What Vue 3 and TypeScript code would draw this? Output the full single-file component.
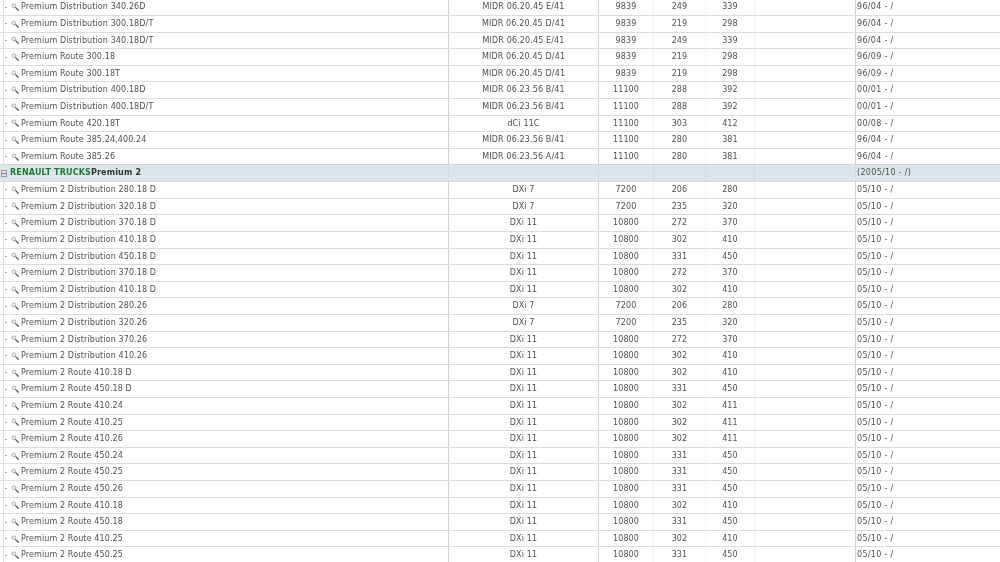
<script setup lang="ts">
interface Row { name: string; engine: string; cc: string; kw: string; hp: string; date: string }
const mk = (name: string, engine: string, cc: string, kw: string, hp: string, date: string): Row => ({ name, engine, cc, kw, hp, date })
const first: Row[] = [
  mk('Premium Distribution 340.26D', 'MIDR 06.20.45 E/41', '9839', '249', '339', '96/04 - /'),
  mk('Premium Distribution 300.18D/T', 'MIDR 06.20.45 D/41', '9839', '219', '298', '96/04 - /'),
  mk('Premium Distribution 340.18D/T', 'MIDR 06.20.45 E/41', '9839', '249', '339', '96/04 - /'),
  mk('Premium Route 300.18', 'MIDR 06.20.45 D/41', '9839', '219', '298', '96/09 - /'),
  mk('Premium Route 300.18T', 'MIDR 06.20.45 D/41', '9839', '219', '298', '96/09 - /'),
  mk('Premium Distribution 400.18D', 'MIDR 06.23.56 B/41', '11100', '288', '392', '00/01 - /'),
  mk('Premium Distribution 400.18D/T', 'MIDR 06.23.56 B/41', '11100', '288', '392', '00/01 - /'),
  mk('Premium Route 420.18T', 'dCi 11C', '11100', '303', '412', '00/08 - /'),
  mk('Premium Route 385.24,400.24', 'MIDR 06.23.56 B/41', '11100', '280', '381', '96/04 - /'),
  mk('Premium Route 385.26', 'MIDR 06.23.56 A/41', '11100', '280', '381', '96/04 - /'),
]
const d = '05/10 - /'
const second: Row[] = [
  mk('Premium 2 Distribution 280.18 D', 'DXi 7', '7200', '206', '280', d),
  mk('Premium 2 Distribution 320.18 D', 'DXi 7', '7200', '235', '320', d),
  mk('Premium 2 Distribution 370.18 D', 'DXi 11', '10800', '272', '370', d),
  mk('Premium 2 Distribution 410.18 D', 'DXi 11', '10800', '302', '410', d),
  mk('Premium 2 Distribution 450.18 D', 'DXi 11', '10800', '331', '450', d),
  mk('Premium 2 Distribution 370.18 D', 'DXi 11', '10800', '272', '370', d),
  mk('Premium 2 Distribution 410.18 D', 'DXi 11', '10800', '302', '410', d),
  mk('Premium 2 Distribution 280.26', 'DXi 7', '7200', '206', '280', d),
  mk('Premium 2 Distribution 320.26', 'DXi 7', '7200', '235', '320', d),
  mk('Premium 2 Distribution 370.26', 'DXi 11', '10800', '272', '370', d),
  mk('Premium 2 Distribution 410.26', 'DXi 11', '10800', '302', '410', d),
  mk('Premium 2 Route 410.18 D', 'DXi 11', '10800', '302', '410', d),
  mk('Premium 2 Route 450.18 D', 'DXi 11', '10800', '331', '450', d),
  mk('Premium 2 Route 410.24', 'DXi 11', '10800', '302', '411', d),
  mk('Premium 2 Route 410.25', 'DXi 11', '10800', '302', '411', d),
  mk('Premium 2 Route 410.26', 'DXi 11', '10800', '302', '411', d),
  mk('Premium 2 Route 450.24', 'DXi 11', '10800', '331', '450', d),
  mk('Premium 2 Route 450.25', 'DXi 11', '10800', '331', '450', d),
  mk('Premium 2 Route 450.26', 'DXi 11', '10800', '331', '450', d),
  mk('Premium 2 Route 410.18', 'DXi 11', '10800', '302', '410', d),
  mk('Premium 2 Route 450.18', 'DXi 11', '10800', '331', '450', d),
  mk('Premium 2 Route 410.25', 'DXi 11', '10800', '302', '410', d),
  mk('Premium 2 Route 450.25', 'DXi 11', '10800', '331', '450', d),
]
const sections = [
  { head: null as null | { brand: string; model: string; date: string }, rows: first },
  { head: { brand: 'RENAULT TRUCKS', model: 'Premium 2', date: '(2005/10 - /)' }, rows: second },
]
</script>

<template>
  <div class="page">
    <div class="list">
      <template v-for="(s, i) in sections" :key="i">
        <div v-if="s.head" class="row head">
          <div class="name">
            <span class="box"><span class="minus"></span></span>
            <b class="brand">{{ s.head.brand }}</b><b class="model">{{ s.head.model }}</b>
          </div>
          <div class="cell strong"></div>
          <div class="cell strong"></div>
          <div class="cell"></div>
          <div class="cell"></div>
          <div class="cell"></div>
          <div class="cell strong date">{{ s.head.date }}</div>
        </div>
        <div v-for="(r, j) in s.rows" :key="j" class="row">
          <div class="name">
            <span class="tree"></span>
            <span class="dash"></span>
            <svg class="icon" width="8" height="8" viewBox="0 0 8 8" aria-hidden="true">
              <circle cx="2.8" cy="2.8" r="1.9" fill="#f0f0f0" stroke="#a0a0a0" stroke-width="0.8" />
              <path d="M4.4 4.4 L7.6 7.6" stroke="#555" stroke-width="1.3" />
            </svg>
            <span class="label">{{ r.name }}</span>
          </div>
          <div class="cell strong mid">{{ r.engine }}</div>
          <div class="cell strong mid">{{ r.cc }}</div>
          <div class="cell mid">{{ r.kw }}</div>
          <div class="cell mid">{{ r.hp }}</div>
          <div class="cell"></div>
          <div class="cell strong date">{{ r.date }}</div>
        </div>
      </template>
    </div>
  </div>
</template>

<style>
html, body { margin: 0; background: #fff; overflow: hidden; }
</style>

<style scoped>
.page {
  width: 1000px;
  height: 562px;
  overflow: hidden;
  background: #fff;
  font-family: "DejaVu Sans", Verdana, sans-serif;
  font-size: 8px;
  color: #505050;
}
.list { margin-top: -0.64px; filter: blur(0.25px); }
.row {
  display: grid;
  grid-template-columns: 448px 150px 55px 52px 49px 101px 145px;
  height: 16.62px;
  box-sizing: border-box;
  border-bottom: 1px solid #dcdcdc;
  line-height: 15.6px;
  white-space: nowrap;
}
.head {
  background: #dce5ea;
  border-bottom-color: #d3dade;
  box-shadow: 0 -1px 0 #cdd5d9;
}
.name { display: flex; align-items: center; min-width: 0; }
.tree {
  align-self: stretch;
  width: 0;
  margin: 0 0 -1px 3px;
  border-left: 1px solid #dedede;
}
.dash { width: 2px; height: 1px; background: #a8a8a8; margin-left: 1px; }
.icon { margin-left: 4px; flex: none; }
.label { margin-left: 2px; letter-spacing: 0.11px; }
.box {
  display: flex;
  align-items: center;
  justify-content: center;
  box-sizing: border-box;
  width: 6px;
  height: 7px;
  margin: 0 3px 0 1px;
  border: 1px solid #999;
  flex: none;
}
.minus { width: 4px; height: 1px; background: #777; }
.brand { color: #1b7d33; letter-spacing: 0.16px; }
.model { color: #333; letter-spacing: 0.16px; }
.cell { border-left: 1px solid #f3f3f3; min-width: 0; }
.strong { border-left-color: #d2d2d2; }
.head .cell { border-left-color: #d2dbe0; }
.mid { text-align: center; letter-spacing: 0.14px; }
.date { padding-left: 1px; letter-spacing: 0.32px; }
</style>
